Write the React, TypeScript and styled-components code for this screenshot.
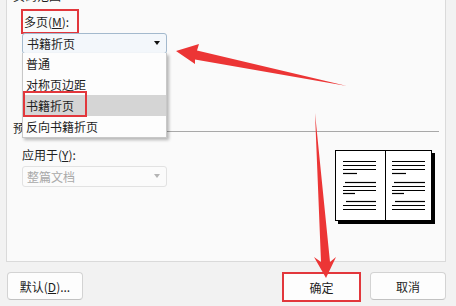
import styled, {createGlobalStyle} from "styled-components";

const GlobalStyle = createGlobalStyle`
    html, body {
        margin: 0;
        padding: 0;
        background: #f2f2f2;
    }
    body {
        font-family: "Noto Sans CJK SC", "Liberation Sans", sans-serif;
        font-size: 12px;
        color: #1e1e1e;
    }
`

const $Dialog = styled.div`
    position: relative;
    width: 456px;
    height: 306px;
    overflow: hidden;
    display: flex;
    flex-direction: column;
`

const $Panel = styled.div`
    box-sizing: border-box;
    height: 262px;
    margin: 0 10px 0 6px;
    padding: 0 0 0 14px;
    background: #fafafa;
    border: 1px solid #dadada;
    border-top: none;
    display: flex;
    flex-direction: column;
`

// group box caption; the top one is scrolled mostly out of view
const $GroupHeader = styled.div<{ $top: number, $ruled?: boolean }>`
    display: flex;
    align-items: center;
    height: 16px;
    line-height: 16px;
    margin: ${p => p.$top}px 6px 0 -8px;

    span {
        white-space: nowrap;
        padding-right: 4px;
    }

    &::after {
        content: "";
        flex: 1;
        height: 1px;
        margin-top: 6px;
        background: ${p => p.$ruled ? '#a8a8a8' : 'transparent'};
    }
`

const $Mark = styled.div`
    box-sizing: border-box;
    border: 2px solid #e2373c;
`

const $FieldMark = styled($Mark)`
    width: 58px;
    height: 25px;
    margin-top: 5px;
    padding-left: 1px;
    line-height: 21px;
    position: relative;
    z-index: 2;
`

const $Label = styled.div<{ $top?: number }>`
    line-height: 16px;
    margin-top: ${p => p.$top ?? 0}px;
    margin-left: 1px;
`

const $Combo = styled.div<{ $disabled?: boolean, $top?: number }>`
    position: relative;
    box-sizing: border-box;
    width: 145px;
    height: 21px;
    margin: ${p => p.$top ?? 0}px 0 0 1px;
    padding-left: 4px;
    line-height: 19px;
    border: 1px solid ${p => p.$disabled ? '#e2e2e2' : '#a3b9cd'};
    border-radius: 3px;
    background: ${p => p.$disabled ? '#fbfbfb' : '#f3f7fb'};
    color: ${p => p.$disabled ? '#a9a9a9' : '#1e1e1e'};
    z-index: 3;

    &::after {
        content: "";
        position: absolute;
        right: 6px;
        top: 7px;
        border-left: 3.5px solid transparent;
        border-right: 3.5px solid transparent;
        border-top: 4px solid ${p => p.$disabled ? '#b4b4b4' : '#111'};
    }
`

const $List = styled.ul`
    position: absolute;
    top: 100%;
    left: -1px;
    box-sizing: border-box;
    width: 145px;
    height: 85px;
    margin: 0;
    padding: 0;
    list-style: none;
    background: #fdfdfd;
    border: 1px solid #c8c8c8;
    border-top: none;
    box-shadow: 2px 2px 3px rgba(0, 0, 0, 0.28);
`

const $Item = styled.li<{ $selected?: boolean }>`
    height: 21px;
    line-height: 21px;
    padding-left: 3px;
    background: ${p => p.$selected ? '#d5d5d5' : 'transparent'};
`

const $ItemMark = styled($Mark)`
    position: absolute;
    left: 0;
    top: 38px;
    width: 64px;
    height: 26px;
`

const $PreviewRow = styled.div`
    display: flex;
    align-items: flex-start;
`

const $ApplyColumn = styled.div`
    display: flex;
    flex-direction: column;
`

const $Book = styled.svg`
    margin: 14px 9px 0 auto;
`

const $Footer = styled.div`
    flex: 1;
    display: flex;
    align-items: flex-start;
    padding: 10px 10px 0 7px;
`

const $Button = styled.button`
    box-sizing: border-box;
    width: 76px;
    height: 28px;
    padding: 0;
    font: inherit;
    color: #1e1e1e;
    background: #fdfdfd;
    border: 1px solid #d3d3d3;
    border-bottom-color: #c2c2c2;
    border-radius: 4px;
`

const $ButtonMark = styled($Mark)`
    width: 79px;
    height: 30px;
    margin-left: auto;
    margin-right: 9px;
    background: #fdfdfd;

    ${$Button} {
        width: 100%;
        height: 100%;
        border: none;
        border-radius: 0;
    }
`

const $Arrows = styled.svg`
    position: absolute;
    left: 0;
    top: 0;
    pointer-events: none;
    z-index: 10;
`

const pageLines = [
    [11, 0, 33], [15, 0, 33], [19, 0, 33], [23, 0, 14],
    [32, 2, 33], [36, 0, 33], [40, 0, 33], [43, 0, 12],
    [51, 3, 33], [55, 0, 33], [59, 0, 33],
]

function BookPreview() {
    return (
        <$Book width="101" height="75" viewBox="0 0 101 75">
            <rect x="3" y="3" width="97" height="71" fill="#000"/>
            <rect x="0.5" y="0.5" width="96" height="70" fill="#fff" stroke="#000"/>
            <line x1="50.5" y1="0" x2="50.5" y2="71" stroke="#000"/>
            {[8, 57].map(left => pageLines.map(([y, indent, len]) => (
                <line key={`${left}-${y}`} x1={left + indent} x2={left + len} y1={y + 0.5} y2={y + 0.5}
                      stroke="#000" strokeWidth="1.2"/>
            )))}
        </$Book>
    )
}

function App() {
    return (
        <$Dialog>
            <GlobalStyle/>
            <$Panel>
                <$GroupHeader $top={-12}><span>页码范围</span></$GroupHeader>
                <$FieldMark>多页(<u>M</u>):</$FieldMark>
                <$Combo $top={-1}>
                    书籍折页
                    <$List>
                        <$Item>普通</$Item>
                        <$Item>对称页边距</$Item>
                        <$Item $selected>书籍折页</$Item>
                        <$Item>反向书籍折页</$Item>
                        <$ItemMark/>
                    </$List>
                </$Combo>
                <$GroupHeader $top={66} $ruled><span>预览</span></$GroupHeader>
                <$PreviewRow>
                    <$ApplyColumn>
                        <$Label $top={11}>应用于(<u>Y</u>):</$Label>
                        <$Combo $disabled $top={3}>整篇文档</$Combo>
                    </$ApplyColumn>
                    <BookPreview/>
                </$PreviewRow>
            </$Panel>
            <$Footer>
                <$Button>默认(<u>D</u>)...</$Button>
                <$ButtonMark><$Button>确定</$Button></$ButtonMark>
                <$Button>取消</$Button>
            </$Footer>
            <$Arrows width="456" height="306" viewBox="0 0 456 306">
                <polygon fill="#ec3535"
                         points="176,51 199,44 197,50.5 347,86 195,59.5 195,64"/>
                <polygon fill="#ec3535"
                         points="315,113 330,262 336,257 326,278 314,257 321,262"/>
            </$Arrows>
        </$Dialog>
    )
}

export default App
